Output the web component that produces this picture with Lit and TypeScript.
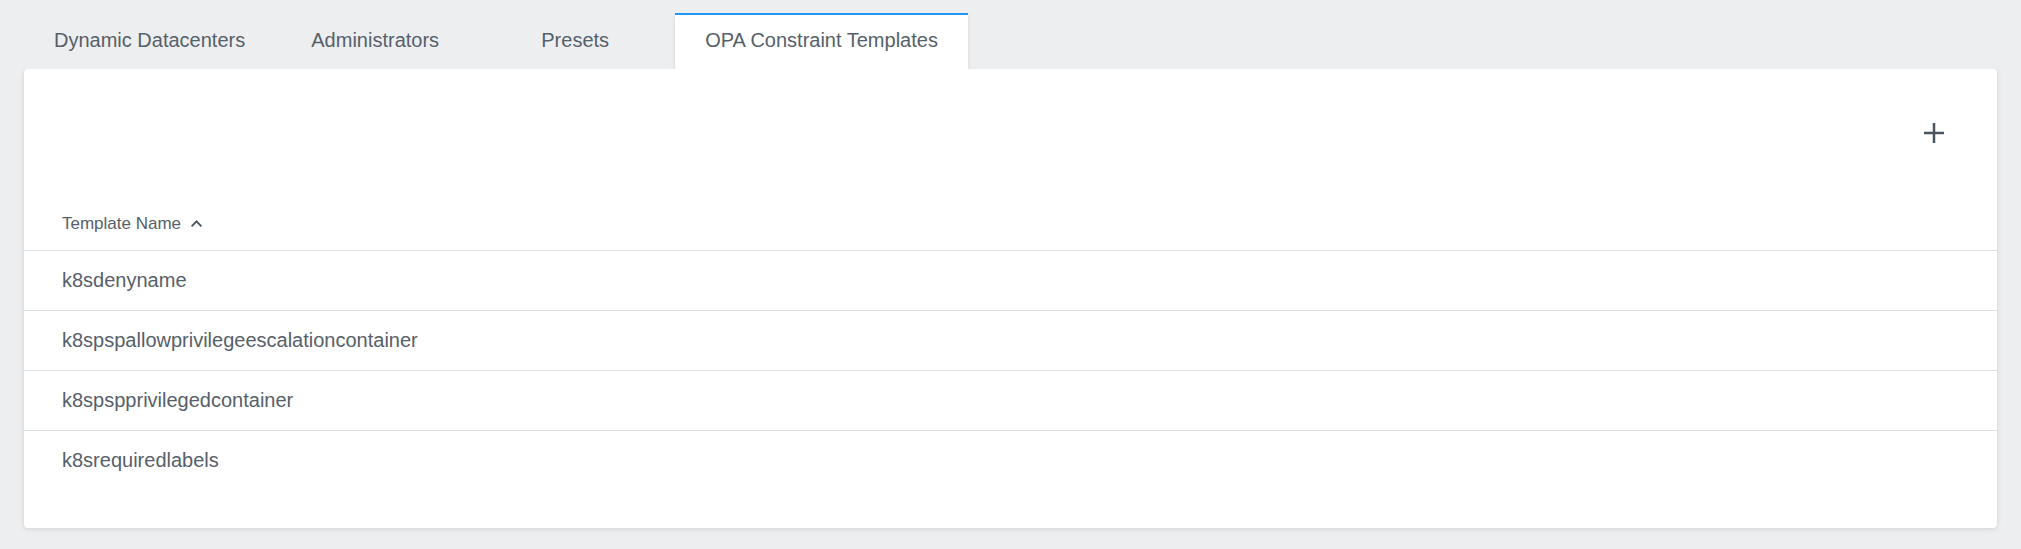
import { LitElement, html, css } from "lit";
import { customElement, state } from "lit/decorators.js";
import { classMap } from "lit/directives/class-map.js";

@customElement("app-root")
export class AppRoot extends LitElement {
  static styles = css`
    :host {
      display: block;
      box-sizing: border-box;
      min-height: 100vh;
      padding: 13px 24px 20px;
      background: #edeef0;
      color: #56606a;
      font-family: "Liberation Sans", Arial, sans-serif;
      font-size: 20px;
      line-height: 24px;
    }
    button {
      margin: 0;
      border: 0;
      background: none;
      color: inherit;
      font: inherit;
      cursor: pointer;
    }
    .tabs {
      display: flex;
      overflow: hidden;
      padding: 0 4px;
      margin: 0 -4px;
    }
    .tab {
      box-sizing: border-box;
      min-width: 200px;
      height: 56px;
      padding: 0 30px 4px;
      border-top: 2px solid transparent;
    }
    .tab.active {
      border-top-color: #2196f3;
      background: #fff;
      box-shadow: 0 2px 4px rgba(0, 0, 0, 0.1);
    }
    .card {
      padding-bottom: 37px;
      border-radius: 4px;
      background: #fff;
      box-shadow: 0 1px 5px rgba(0, 0, 0, 0.12);
      clip-path: inset(0 -10px -10px -10px);
    }
    .toolbar {
      display: flex;
      align-items: center;
      justify-content: flex-end;
      height: 128px;
      padding: 0 43px;
    }
    .add {
      display: flex;
      padding: 10px;
    }
    table {
      width: 100%;
      border-collapse: separate;
      border-spacing: 0;
    }
    th,
    td {
      box-sizing: border-box;
      height: 60px;
      padding: 0 38px 2px;
      border-bottom: 1px solid #dee1e4;
      text-align: left;
      font-weight: 400;
    }
    th {
      height: 54px;
      padding-bottom: 0;
    }
    tbody tr:last-child td {
      border-bottom: 0;
    }
    .sort {
      display: flex;
      align-items: center;
      gap: 10px;
      padding: 0;
      font-size: 17px;
    }
  `;

  @state() private active = "OPA Constraint Templates";
  @state() private ascending = true;

  private tabs = ["Dynamic Datacenters", "Administrators", "Presets", "OPA Constraint Templates"];
  private templates = [
    "k8sdenyname",
    "k8spspallowprivilegeescalationcontainer",
    "k8spspprivilegedcontainer",
    "k8srequiredlabels",
  ];

  render() {
    const rows = this.ascending ? this.templates : [...this.templates].reverse();
    return html`
      <div class="tabs" role="tablist">
        ${this.tabs.map(
          (name) => html`<button
            role="tab"
            class=${classMap({ tab: true, active: name === this.active })}
            aria-selected=${name === this.active}
            @click=${() => (this.active = name)}
          >${name}</button>`
        )}
      </div>
      <section class="card" role="tabpanel" aria-label=${this.active}>
        <div class="toolbar">
          <button class="add" aria-label="Add constraint template">
            <svg width="20" height="20" viewBox="0 0 20 20" fill="none" stroke="#4a545e" stroke-width="2.5">
              <path d="M10 0v20M0 10h20" />
            </svg>
          </button>
        </div>
        <table>
          <thead>
            <tr>
              <th scope="col" aria-sort=${this.ascending ? "ascending" : "descending"}>
                <button class="sort" @click=${() => (this.ascending = !this.ascending)}>
                  Template Name
                  <svg width="11" height="7" viewBox="0 0 11 7" fill="none" stroke="#4a545e" stroke-width="1.8">
                    <path d=${this.ascending ? "M.6 6.300 5.500 1.300l4.900 5" : "M.6 .7 5.500 5.700l4.900-5"} />
                  </svg>
                </button>
              </th>
            </tr>
          </thead>
          <tbody>
            ${rows.map((name) => html`<tr><td>${name}</td></tr>`)}
          </tbody>
        </table>
      </section>
    `;
  }
}
